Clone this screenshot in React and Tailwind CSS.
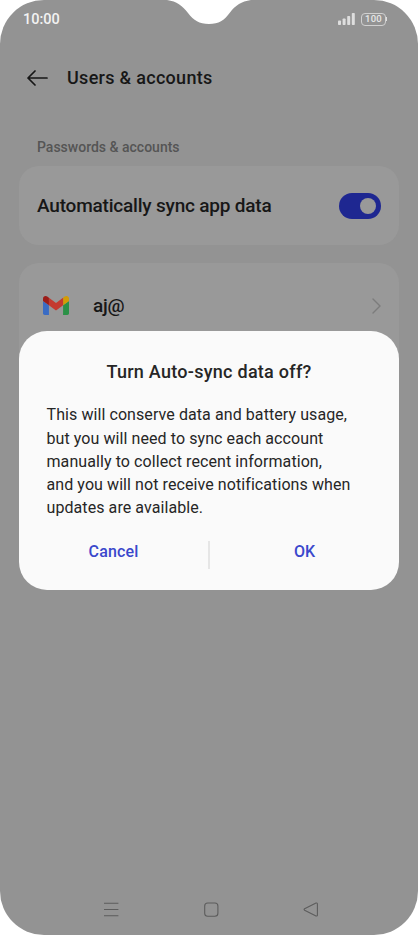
import React from 'react';

const StatusBar = () => (
  <div className="flex h-[38px] items-center justify-between pl-[23px] pr-[31px] text-[#f2f2f2]">
    <span className="mt-[2px] text-[14.5px] font-medium leading-none">10:00</span>
    <div className="flex items-center gap-[6px]">
      <svg width="17" height="12" viewBox="0 0 17 12" fill="#dedede">
        <rect x="0" y="7.5" width="3" height="4.5" rx="0.8" />
        <rect x="4.6" y="5.5" width="3" height="6.5" rx="0.8" />
        <rect x="9.2" y="3" width="3" height="9" rx="0.8" />
        <rect x="13.8" y="0" width="3" height="12" rx="0.8" />
      </svg>
      <div className="flex items-center">
        <div className="flex h-[13px] w-[25px] items-center justify-center rounded-[4px] border border-[#d0d0d0] text-[9.5px] font-medium leading-none tracking-[0.3px] text-[#e6e6e6]">
          100
        </div>
        <div className="h-[4px] w-[1px] bg-[#dedede]" />
      </div>
    </div>
  </div>
);

const GmailIcon = () => (
  <svg width="26" height="19" viewBox="52 42 88 66" preserveAspectRatio="none">
    <path fill="#3a6cc4" d="M58 108h14V74L52 59v43c0 3.32 2.69 6 6 6" />
    <path fill="#2b9147" d="M120 108h14c3.32 0 6-2.69 6-6V59l-20 15" />
    <path fill="#d39c05" d="M120 48v26l20-15v-8c0-7.42-8.47-11.65-14.4-7.2" />
    <path fill="#c43a30" d="M72 74V48l24 18 24-18v26L96 92" />
    <path fill="#9c1d19" d="M52 51v8l20 15V48l-5.6-4.2c-5.94-4.45-14.4-.22-14.4 7.2" />
  </svg>
);

const Toggle = () => (
  <div className="flex h-[26px] w-[42px] items-center justify-end rounded-full bg-[#1e2791] pr-[5px]">
    <div className="size-[16px] rounded-full bg-[#999999]" />
  </div>
);

const NavBar = () => (
  <div className="mt-auto flex h-[51px] items-center justify-between pl-[103px] pr-[99px] text-[#5c5c5c]">
    <svg width="16" height="16" viewBox="0 0 16 16" stroke="currentColor" strokeWidth="1.1" fill="none">
      <path d="M1 1.2h14.4M1 7.5h14.4M1 13.8h14.4" />
    </svg>
    <svg width="16" height="16" viewBox="0 0 16 16" stroke="currentColor" strokeWidth="1.1" fill="none">
      <rect x="1.7" y="1" width="13.2" height="13.2" rx="3" />
    </svg>
    <svg width="16" height="16" viewBox="0 0 16 16" stroke="currentColor" strokeWidth="1.1" fill="none" strokeLinejoin="round">
      <path d="M1.6 6.8 13 1.1q1.4-.5 1.4 1v10.8q0 1.5-1.4 1L1.6 8.2q-1-.7 0-1.4z" />
    </svg>
  </div>
);

const ConfirmDialog = () => (
  <div className="absolute left-[19px] top-[331px] flex h-[259px] w-[380px] flex-col rounded-[28px] bg-[#fafafa] text-[#262626]">
    <h2 className="mt-[29px] text-center text-[18px] font-medium leading-[24px] tracking-[0.27px]">
      Turn Auto-sync data off?
    </h2>
    <p className="mt-[19.4px] whitespace-nowrap pl-[27.5px] text-[16px] leading-[23.2px] tracking-[0.08px]">
      This will conserve data and battery usage,<br />
      but you will need to sync each account<br />
      manually to collect recent information,<br />
      and you will not receive notifications when<br />
      updates are available.
    </p>
    <div className="mt-[11.6px] flex h-[45px] items-center text-[16px] font-medium text-[#3a48cc]">
      <button className="flex-1 pb-[3px] tracking-[0.15px]">Cancel</button>
      <div className="mt-[3px] h-[28px] w-[2px] bg-[#e6e6e6]" />
      <button className="flex-1 pb-[3px]">OK</button>
    </div>
  </div>
);

const App = () => (
  <div className="h-[935px] w-[418px] overflow-hidden bg-white font-[Roboto,sans-serif]">
    <div className="relative flex h-full flex-col overflow-hidden rounded-[44px] bg-[#939393] text-[#171717]">
      <svg className="absolute left-[160px] top-0" width="100" height="25" viewBox="0 0 100 25">
        <path fill="#fff" d="M7 0C17 1.5 22 5.5 28 13C34 20.5 39 24 49 24S64 20.5 70 12.5C76 5 81 1.5 91 0z" />
      </svg>
      <StatusBar />

      <header className="flex h-[79px] items-center pl-[27px]">
        <svg width="21" height="16" viewBox="0 0 21 16" fill="none" stroke="currentColor" strokeWidth="1.7" strokeLinecap="round" strokeLinejoin="round">
          <path d="M20 8H1M8 1 1 8l7 7" />
        </svg>
        <h1 className="ml-[19px] text-[18px] font-medium tracking-[0.3px]">Users &amp; accounts</h1>
      </header>

      <main className="px-[19px]">
        <h3 className="mt-[20px] pl-[18px] text-[14px] font-medium leading-[20px] text-[#555555]">
          Passwords &amp; accounts
        </h3>
        <div className="mt-[9px] flex h-[79px] items-center justify-between rounded-[20px] bg-[#999999] pl-[18px] pr-[18px]">
          <span className="mt-[2px] text-[19px] font-medium tracking-[-0.2px]">Automatically sync app data</span>
          <Toggle />
        </div>
        <div className="mt-[18px] h-[120px] rounded-[20px] bg-[#999999]">
          <div className="flex h-[85px] items-center pl-[24px] pr-[18px]">
            <GmailIcon />
            <span className="ml-[24px] mt-[2px] text-[19px] font-medium tracking-[-0.2px]">aj@</span>
            <svg className="ml-auto" width="9" height="16" viewBox="0 0 9 16" fill="none" stroke="#7c7c7c" strokeWidth="1.4" strokeLinecap="round" strokeLinejoin="round">
              <path d="M1 1l7 7-7 7" />
            </svg>
          </div>
        </div>
      </main>

      <NavBar />
      <ConfirmDialog />
    </div>
  </div>
);

export default App;
